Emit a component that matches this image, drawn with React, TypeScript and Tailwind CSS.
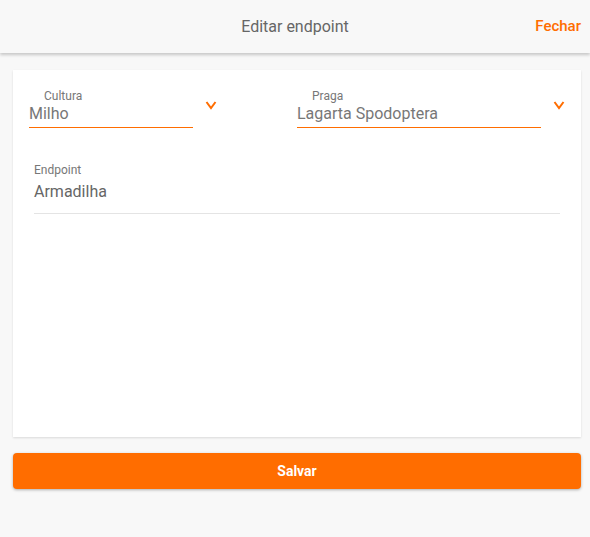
import React from "react";

function Chevron() {
  return (
    <svg width="12" height="10" viewBox="0 0 12 10" className="shrink-0">
      <polyline points="1.5,2 6,8 10.5,2" fill="none" stroke="#ff6d00" strokeWidth="2" />
    </svg>
  );
}

function SelectField({ label, value, width }: { label: string; value: string; width: string }) {
  return (
    <div className="flex items-start">
      <div className={`${width} border-b border-[#ff6d00]`}>
        <div className="pl-[15px] text-[12px] leading-[14px] text-[#777]">{label}</div>
        <div className="text-[16px] leading-[22px] pb-[2px] text-[#777]">{value}</div>
      </div>
      <div className="ml-[12px] mt-[11px]">
        <Chevron />
      </div>
    </div>
  );
}

export default function App() {
  return (
    <div
      className="min-h-[537px] bg-[#f8f8f8]"
      style={{ fontFamily: "Roboto, 'Liberation Sans', sans-serif" }}
    >
      {/* Header */}
      <header className="relative h-[53px] bg-[#f8f8f8] shadow-[0_2px_3px_rgba(0,0,0,0.2)] flex items-center justify-center">
        <h1 className="text-[16px] text-[#666]">Editar endpoint</h1>
        <button className="absolute right-[9px] top-[15px] text-[15px] font-medium text-[#ff6d00]">
          Fechar
        </button>
      </header>

      <main className="pl-[13px] pr-[9px] pt-[17px]">
        {/* Card */}
        <div className="h-[367px] bg-white shadow-[0_1px_2px_rgba(0,0,0,0.12)] pt-[19px]">
          <div className="flex pl-[16px]">
            <div className="w-[268px]">
              <SelectField label="Cultura" value="Milho" width="w-[164px]" />
            </div>
            <SelectField label="Praga" value="Lagarta Spodoptera" width="w-[244px]" />
          </div>

          <div className="mx-[21px] mt-[35px] border-b border-[#e4e4e4] pb-[10px]">
            <div className="text-[12px] leading-[14px] text-[#777]">Endpoint</div>
            <div className="mt-[4px] text-[16px] leading-[22px] text-[#666]">Armadilha</div>
          </div>
        </div>

        <button className="mt-[16px] w-full h-[36px] rounded-[4px] bg-[#ff6d00] shadow-[0_1px_3px_rgba(0,0,0,0.3)] text-white text-[14px] font-bold">
          Salvar
        </button>
      </main>
    </div>
  );
}
